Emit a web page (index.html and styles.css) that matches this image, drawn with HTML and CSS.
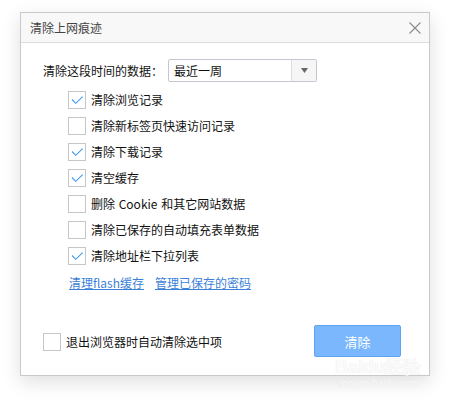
FILE: index.html
```html
<!DOCTYPE html>
<html lang="zh">
<head>
<meta charset="utf-8">
<title>清除上网痕迹</title>
<link rel="stylesheet" href="styles.css">
</head>
<body>
<div class="dialog">
  <div class="header">
    <span class="title">清除上网痕迹</span>
    <svg class="close" width="12" height="12" viewBox="0 0 12 12"><path d="M0.5 0.5 L11.5 11.5 M11.5 0.5 L0.5 11.5" stroke="#8a8a8a" stroke-width="1.1" fill="none"/></svg>
  </div>
  <div class="body">
    <div class="range-row">
      <span class="range-label">清除这段时间的数据：</span>
      <div class="select">
        <span class="select-value">最近一周</span>
        <span class="select-arrow"><svg width="7" height="5" viewBox="0 0 7 5"><path d="M0 0 H7 L3.5 5 Z" fill="#666"/></svg></span>
      </div>
    </div>
    <ul class="options">
      <li class="option"><span class="cb checked"><svg width="16" height="16" viewBox="0 0 16 16"><path d="M3 7.5 L6.7 11.3 L13.7 4.6" stroke="#3d9af0" stroke-width="1.1" fill="none"/></svg></span>清除浏览记录</li>
      <li class="option"><span class="cb"></span>清除新标签页快速访问记录</li>
      <li class="option"><span class="cb checked"><svg width="16" height="16" viewBox="0 0 16 16"><path d="M3 7.5 L6.7 11.3 L13.7 4.6" stroke="#3d9af0" stroke-width="1.1" fill="none"/></svg></span>清除下载记录</li>
      <li class="option"><span class="cb checked"><svg width="16" height="16" viewBox="0 0 16 16"><path d="M3 7.5 L6.7 11.3 L13.7 4.6" stroke="#3d9af0" stroke-width="1.1" fill="none"/></svg></span>清空缓存</li>
      <li class="option"><span class="cb"></span>删除 Cookie 和其它网站数据</li>
      <li class="option"><span class="cb"></span>清除已保存的自动填充表单数据</li>
      <li class="option"><span class="cb checked"><svg width="16" height="16" viewBox="0 0 16 16"><path d="M3 7.5 L6.7 11.3 L13.7 4.6" stroke="#3d9af0" stroke-width="1.1" fill="none"/></svg></span>清除地址栏下拉列表</li>
    </ul>
    <div class="links">
      <a href="#">清理flash缓存</a>
      <a href="#">管理已保存的密码</a>
    </div>
    <div class="footer">
      <label class="auto"><span class="cb"></span>退出浏览器时自动清除选中项</label>
      <button class="btn">清除</button>
    </div>
  </div>
</div>
<div class="watermark">
  <div class="wm-big">Baidu经验</div>
  <div class="wm-small">jingyan.baidu.com</div>
</div>
</body>
</html>
```
FILE: styles.css
```css
html, body {
  margin: 0;
  padding: 0;
  background: #fff;
}
body {
  font-family: "Noto Sans CJK SC", "Microsoft YaHei", sans-serif;
  font-size: 12px;
  color: #111;
  position: relative;
  width: 450px;
  height: 404px;
  overflow: hidden;
}
.dialog {
  margin: 12px 0 0 20px;
  width: 408px;
  height: 362px;
  border: 1px solid #c9c9c9;
  background: #fff;
  box-shadow: 0 6px 18px rgba(0, 0, 0, 0.13);
  display: flex;
  flex-direction: column;
}
.header {
  height: 29px;
  background: #f8f8f8;
  border-bottom: 1px solid #dcdcdc;
  display: flex;
  align-items: center;
  justify-content: space-between;
  padding: 0 9px 0 9px;
}
.title {
  color: #444;
  font-size: 12px;
  line-height: 29px;
}
.close {
  display: block;
  margin-right: -1px;
}
.body {
  flex: 1;
  display: flex;
  flex-direction: column;
  padding: 16px 28px 18px 22px;
}
.range-row {
  display: flex;
  align-items: center;
  height: 23px;
}
.range-label {
  width: 125px;
  line-height: 23px;
}
.select {
  width: 147px;
  height: 21px;
  border: 1px solid #c4c7cf;
  border-radius: 2px;
  display: flex;
}
.select-value {
  flex: 1;
  padding-left: 5px;
  line-height: 21px;
  color: #111;
}
.select-arrow {
  width: 24px;
  border-left: 1px solid #dedede;
  background: #f6f6f6;
  display: flex;
  align-items: center;
  justify-content: center;
}
.options {
  list-style: none;
  margin: 9px 0 0 25px;
  padding: 0;
  display: flex;
  flex-direction: column;
  gap: 8px;
}
.option {
  display: flex;
  align-items: center;
  height: 18px;
  line-height: 18px;
  word-spacing: 1px;
}
.cb {
  width: 16px;
  height: 16px;
  border: 1px solid #c6c6c6;
  background: #fff;
  margin-right: 5px;
  flex: none;
  display: block;
}
.cb svg {
  display: block;
}
.links {
  margin: 9px 0 0 26px;
  height: 18px;
  line-height: 18px;
  display: flex;
  gap: 11px;
}
.links a {
  color: #3b7fd8;
  text-decoration: underline;
}
.footer {
  margin-top: auto;
  display: flex;
  align-items: center;
  justify-content: space-between;
}
.auto {
  display: flex;
  align-items: center;
  margin-top: 1px;
}
.btn {
  width: 87px;
  height: 32px;
  border: 1px solid #5ea3f4;
  border-radius: 2px;
  background: #7ab7fd;
  color: #fff;
  font-family: inherit;
  font-size: 13px;
  padding: 0;
}
.watermark {
  position: absolute;
  left: 333px;
  top: 356px;
  width: 90px;
  text-align: center;
  color: #fbfbfb;
  text-shadow: 0 0 1px #dedede;
  pointer-events: none;
}
.wm-big {
  font-family: "Liberation Sans", sans-serif;
  font-size: 18px;
  font-weight: bold;
  line-height: 22px;
}
.wm-small {
  font-family: "Liberation Sans", sans-serif;
  font-size: 10px;
  line-height: 12px;
}
```
